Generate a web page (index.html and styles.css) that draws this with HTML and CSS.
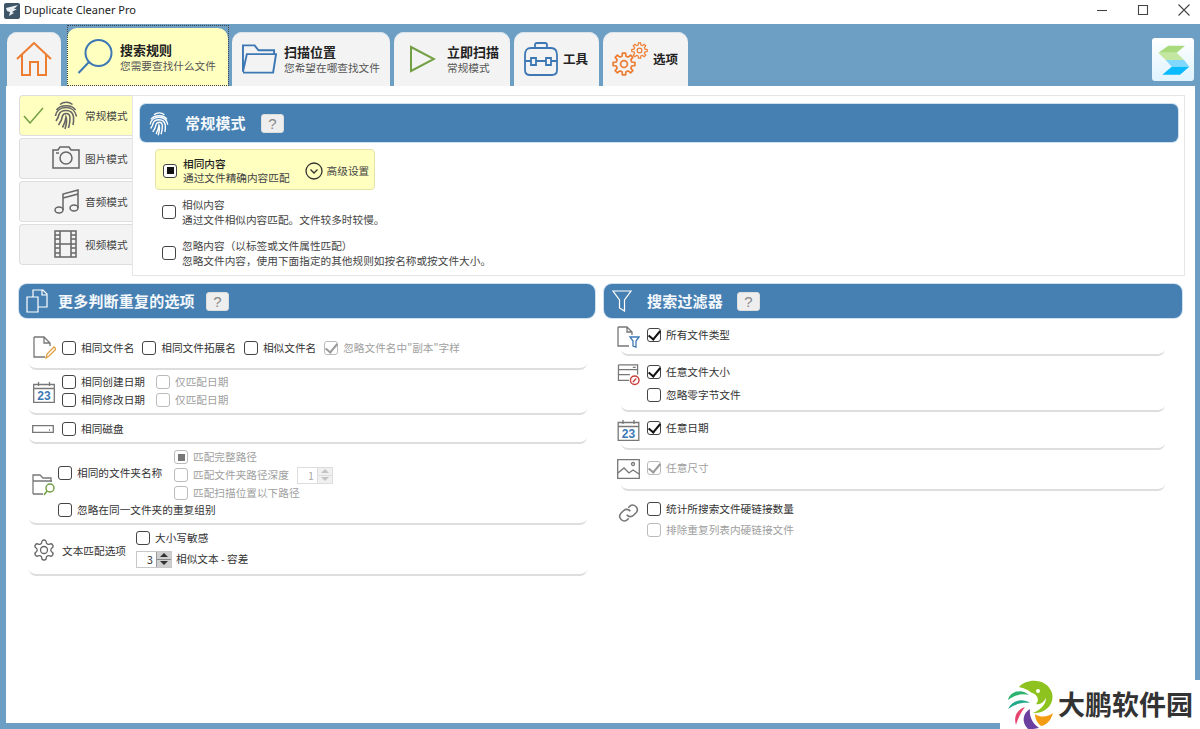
FILE: index.html
```html
<!DOCTYPE html>
<html lang="zh-CN">
<head>
  <meta charset="UTF-8">
  <title>Duplicate Cleaner Pro</title>
  <link rel="stylesheet" href="styles.css">
</head>
<body>
  <svg class="defs" width="0" height="0">
    <symbol id="gear8" viewBox="-12 -12 24 24">
      <path d="M-1.94-7.76L-1.53-10.89 1.53-10.89 1.94-7.76 4.12-6.86 6.62-8.79 8.79-6.62 6.86-4.12 7.76-1.94 10.89-1.53 10.89 1.53 7.76 1.94 6.86 4.12 8.79 6.62 6.62 8.79 4.12 6.86 1.94 7.76 1.53 10.89-1.53 10.89-1.94 7.76-4.12 6.86-6.62 8.79-8.79 6.62-6.86 4.12-7.76 1.94-10.89 1.53-10.89-1.53-7.76-1.94-6.86-4.12-8.79-6.62-6.62-8.79-4.12-6.86Z"/>
      <circle r="3.4"/>
    </symbol>
    <symbol id="fingerprint" viewBox="0 0 24 30">
      <path d="M6 4.5C9.5 1.5 15 1.5 18.500 4.500"/>
      <path d="M2.500 10C6 4.500 18 4 21.500 10"/>
      <path d="M1.500 16C2.500 9.500 8 7.500 12 7.500 17 7.500 21.500 10.500 22.500 16.500"/>
      <path d="M2 21C3.500 19 4.500 17 5 14.500 6 11.500 9 10.500 12 10.500 16 10.500 19 13 19.500 17 19.800 20 19.500 23 19 25"/>
      <path d="M4.500 25C7 22 8 19 8.500 16 9 14.500 10.500 13.500 12 13.500 14.500 13.500 16 15.500 16 18 16 21.500 15.500 25 14.500 28"/>
      <path d="M8.500 27.500C10.500 24 11.500 20.500 12 17 13 19.500 12.500 24.500 11 29"/>
    </symbol>
  </svg>

  <header class="titlebar">
    <svg class="app-icon" viewBox="0 0 16 16">
      <rect width="16" height="16" rx="2" fill="#3d5566"/>
      <path d="M2 5L14 2 10 6 13 6 8 9 10 10 5 13 6 9 3 8Z" fill="#e8eef2"/>
    </svg>
    <span class="app-title">Duplicate Cleaner Pro</span>
    <div class="win-controls">
      <svg class="win-btn" viewBox="0 0 14 14"><path d="M2 7.500H12"/></svg>
      <svg class="win-btn" viewBox="0 0 14 14"><path d="M2.500 2.500H11.500V11.500H2.500Z"/></svg>
      <svg class="win-btn" viewBox="0 0 14 14"><path d="M1.500 1.500L12.500 12.500M12.500 1.500L1.500 12.500"/></svg>
    </div>
  </header>

  <nav class="tabs">
    <div class="tab tab-home">
      <svg class="tab-icon home-icon" viewBox="0 0 36 34"><path d="M1 17L18 1 35 17M6 13V33H14V20H22V33H30V13"/></svg>
    </div>
    <div class="tab tab-active tab-search">
      <svg class="tab-icon search-icon" viewBox="0 0 36 36"><circle cx="21.500" cy="14" r="13"/><path d="M12 23L1.500 34"/></svg>
      <div class="tab-text"><strong>搜索规则</strong><span>您需要查找什么文件</span></div>
    </div>
    <div class="tab tab-location">
      <svg class="tab-icon folder-icon" viewBox="0 0 36 32"><path d="M1 29V2H13L17 7H33V11M1 30H32L35 11H5L1 29"/></svg>
      <div class="tab-text"><strong>扫描位置</strong><span>您希望在哪查找文件</span></div>
    </div>
    <div class="tab tab-scan">
      <svg class="tab-icon play-icon" viewBox="0 0 27 28"><path d="M2 2L25 14 2 26Z"/></svg>
      <div class="tab-text"><strong>立即扫描</strong><span>常规模式</span></div>
    </div>
    <div class="tab tab-tools">
      <svg class="tab-icon tools-icon" viewBox="0 0 36 34"><path d="M2 13Q2 6 8 6H28Q34 6 34 13V28Q34 33 29 33H7Q2 33 2 28ZM12 6V3Q12 1 14 1H22Q24 1 24 3V6M2 19H8M13 19H23M28 19H34M8 16H13V23H8ZM23 16H28V23H23Z"/></svg>
      <strong class="tab-label">工具</strong>
    </div>
    <div class="tab tab-options">
      <svg class="tab-icon gears-icon" viewBox="0 0 36 36">
        <use href="#gear8" x="0" y="11" width="24" height="24"/>
        <use href="#gear8" x="19" y="1" width="17" height="17"/>
      </svg>
      <strong class="tab-label">选项</strong>
    </div>
    <div class="brand-tile">
      <svg viewBox="0 0 42 43">
        <path d="M16.300 7.700H33L24.700 14.700H6.300Z" fill="#a9da7c"/>
        <path d="M6.300 14.700H24.700L32 22H13.700Z" fill="#c3e6a0"/>
        <path d="M13.700 22H32L37.300 28.700H19.700Z" fill="#80d8ff"/>
        <path d="M19.700 28.700H37.300L28 36.700H10.300Z" fill="#0abaff"/>
      </svg>
    </div>
  </nav>

  <main class="content">
    <section class="top-area">
      <div class="mode-list">
        <div class="mode mode-active">
          <svg class="mode-check" viewBox="0 0 21 17"><path d="M1 9L7 16 20 1"/></svg>
          <svg class="mode-icon print-icon"><use href="#fingerprint"/></svg>
          <span>常规模式</span>
        </div>
        <div class="mode">
          <svg class="mode-icon camera-icon" viewBox="0 0 28 23"><path d="M1 4H6L8 1H17L19 4H27V22H1Z"/><circle cx="14" cy="12" r="6"/><path d="M4 7H7"/></svg>
          <span>图片模式</span>
        </div>
        <div class="mode">
          <svg class="mode-icon music-icon" viewBox="0 0 25 25"><ellipse cx="5" cy="21" rx="4" ry="3"/><ellipse cx="20" cy="19" rx="4" ry="3"/><path d="M9 21V5L24 1V19M9 9L24 5"/></svg>
          <span>音频模式</span>
        </div>
        <div class="mode">
          <svg class="mode-icon film-icon" viewBox="0 0 23 28"><path d="M1 1H22V27H1ZM6 1V27M17 1V27M6 14H17M1 5H6M1 9H6M1 14H6M1 18H6M1 23H6M17 5H22M17 9H22M17 14H22M17 18H22M17 23H22"/></svg>
          <span>视频模式</span>
        </div>
      </div>

      <div class="mode-panel">
        <div class="bar bar-top">
          <svg class="bar-icon print-white"><use href="#fingerprint"/></svg>
          <h2>常规模式</h2>
          <span class="help">?</span>
        </div>
        <div class="choice choice-on">
          <i class="box box-square"></i>
          <div class="choice-text"><strong>相同内容</strong><span>通过文件精确内容匹配</span></div>
          <svg class="adv-icon" viewBox="0 0 18 18"><circle cx="9" cy="9" r="8"/><path d="M5.500 7.500L9 11 12.500 7.500"/></svg>
          <span class="adv-label">高级设置</span>
        </div>
        <div class="choice choice-second">
          <i class="box"></i>
          <div class="choice-text"><span>相似内容</span><span>通过文件相似内容匹配。文件较多时较慢。</span></div>
        </div>
        <div class="choice choice-third">
          <i class="box"></i>
          <div class="choice-text"><span>忽略内容（以标签或文件属性匹配）</span><span>忽略文件内容，使用下面指定的其他规则如按名称或按文件大小。</span></div>
        </div>
      </div>
    </section>

    <section class="lower-area">
      <div class="column">
        <div class="bar bar-left">
          <svg class="bar-icon copy-icon" viewBox="0 0 22 24"><path d="M1 8H12V23H1ZM7 8V1H17L21 5V18H12M16 1V6H21"/></svg>
          <h2>更多判断重复的选项</h2>
          <span class="help">?</span>
        </div>

        <div class="row row-name">
          <svg class="row-icon note-icon" viewBox="0 0 23 23"><path class="stroke-gray" d="M1 1H11L17 7V10M11 1V7H17M1 1V21H12"/><path class="stroke-amber" d="M13 22L14 18 21 11 23 13 16 20Z"/></svg>
          <label class="opt"><i class="box"></i>相同文件名</label>
          <label class="opt"><i class="box"></i>相同文件拓展名</label>
          <label class="opt"><i class="box"></i>相似文件名</label>
          <label class="opt opt-off"><i class="box box-tick"></i>忽略文件名中"副本"字样</label>
        </div>

        <div class="row row-date">
          <svg class="row-icon cal-icon" viewBox="0 0 22 22">
            <path class="stroke-gray" d="M.7 3.500H21.300V21.300H.7ZM.7 7.500H21.300M5.500 1V5M16.500 1V5"/>
            <text class="cal-num" x="11" y="18.500" text-anchor="middle">23</text>
          </svg>
          <div class="date-grid">
            <label class="opt"><i class="box"></i>相同创建日期</label>
            <label class="opt opt-off"><i class="box"></i>仅匹配日期</label>
            <label class="opt"><i class="box"></i>相同修改日期</label>
            <label class="opt opt-off"><i class="box"></i>仅匹配日期</label>
          </div>
        </div>

        <div class="row row-disk">
          <svg class="row-icon disk-icon" viewBox="0 0 22 8"><path class="stroke-gray" d="M.7.7H21.300V7.300H.7Z"/><path class="stroke-gray" d="M17 5H18"/></svg>
          <label class="opt"><i class="box"></i>相同磁盘</label>
        </div>

        <div class="row row-folder">
          <svg class="row-icon folder-find" viewBox="0 0 24 22"><path class="stroke-gray" d="M1 20V1H8L11 4H19V8M1 7H20M1 20H11"/><circle class="stroke-green" cx="18" cy="14" r="4"/><path class="stroke-green" d="M15 17L12 21"/></svg>
          <div class="folder-main">
            <label class="opt"><i class="box"></i>相同的文件夹名称</label>
          </div>
          <div class="folder-sub">
            <label class="opt opt-off"><i class="box box-square"></i>匹配完整路径</label>
            <div class="opt-line">
              <label class="opt opt-off"><i class="box"></i>匹配文件夹路径深度</label>
              <div class="spin spin-off">
                <span class="spin-val">1</span>
                <span class="spin-btns"><b class="up"></b><b class="down"></b></span>
              </div>
            </div>
            <label class="opt opt-off"><i class="box"></i>匹配扫描位置以下路径</label>
          </div>
          <label class="opt folder-group"><i class="box"></i>忽略在同一文件夹的重复组别</label>
        </div>

        <div class="row row-text">
          <svg class="row-icon cog-icon" viewBox="0 0 24 24"><path d="M12.220 2h-.44a2 2 0 0 0-2 2v.18a2 2 0 0 1-1 1.730l-.43.25a2 2 0 0 1-2 0l-.15-.08a2 2 0 0 0-2.730.73l-.22.38a2 2 0 0 0 .73 2.730l.15.1a2 2 0 0 1 1 1.720v.51a2 2 0 0 1-1 1.740l-.15.09a2 2 0 0 0-.73 2.730l.22.38a2 2 0 0 0 2.730.73l.15-.08a2 2 0 0 1 2 0l.43.25a2 2 0 0 1 1 1.730V20a2 2 0 0 0 2 2h.44a2 2 0 0 0 2-2v-.18a2 2 0 0 1 1-1.730l.43-.25a2 2 0 0 1 2 0l.15.08a2 2 0 0 0 2.730-.73l.22-.39a2 2 0 0 0-.73-2.730l-.15-.08a2 2 0 0 1-1-1.740v-.5a2 2 0 0 1 1-1.740l.15-.09a2 2 0 0 0 .73-2.730l-.22-.38a2 2 0 0 0-2.730-.73l-.15.08a2 2 0 0 1-2 0l-.43-.25a2 2 0 0 1-1-1.730V4a2 2 0 0 0-2-2z"/><circle cx="12" cy="12" r="3.500"/></svg>
          <span class="text-label">文本匹配选项</span>
          <div class="text-opts">
            <label class="opt"><i class="box"></i>大小写敏感</label>
            <div class="opt-line">
              <div class="spin">
                <span class="spin-val">3</span>
                <span class="spin-btns"><b class="up"></b><b class="down"></b></span>
              </div>
              <span class="spin-label">相似文本 - 容差</span>
            </div>
          </div>
        </div>
      </div>

      <div class="column">
        <div class="bar bar-right">
          <svg class="bar-icon funnel-icon" viewBox="0 0 20 22"><path d="M1 1H19L12.500 10V21L7.500 18V10Z"/></svg>
          <h2>搜索过滤器</h2>
          <span class="help">?</span>
        </div>

        <div class="row f-row f-type">
          <svg class="row-icon f-icon" viewBox="0 0 23 22"><path class="stroke-gray" d="M1 1H10L15 6V9M10 1V6H15M1 1V20H12"/><path class="stroke-blue" d="M13 11H22L19 15V21L16 20V15Z"/></svg>
          <label class="opt"><i class="box box-check"></i>所有文件类型</label>
        </div>

        <div class="row f-row f-size">
          <svg class="row-icon f-icon" viewBox="0 0 23 23"><path class="stroke-gray" d="M1 1H21V11M1 1V17H12M1 6H21M1 11H13M16 3.500H19"/><circle class="stroke-red" cx="18" cy="17" r="4.500"/><path class="stroke-red" d="M16 19L19.500 15"/></svg>
          <div class="f-stack">
            <label class="opt"><i class="box box-check"></i>任意文件大小</label>
            <label class="opt"><i class="box"></i>忽略零字节文件</label>
          </div>
        </div>

        <div class="row f-row f-date">
          <svg class="row-icon f-icon" viewBox="0 0 22 22">
            <path class="stroke-gray" d="M.7 3.500H21.300V21.300H.7ZM.7 7.500H21.300M5.500 1V5M16.500 1V5"/>
            <text class="cal-num" x="11" y="18.500" text-anchor="middle">23</text>
          </svg>
          <label class="opt"><i class="box box-check"></i>任意日期</label>
        </div>

        <div class="row f-row f-dim">
          <svg class="row-icon f-icon" viewBox="0 0 23 20"><path class="stroke-gray" d="M.7.7H22.300V19.300H.7ZM1 14L7 9 12 14 16 11 22 15"/><circle class="stroke-gray" cx="16" cy="5" r="1.500"/></svg>
          <label class="opt opt-off"><i class="box box-tick"></i>任意尺寸</label>
        </div>

        <div class="f-row f-link">
          <svg class="row-icon f-icon link-icon" viewBox="0 0 24 24"><path d="M10 14a5 5 0 0 0 7.500.5l3-3a5 5 0 0 0-7-7l-1.700 1.700"/><path d="M14 10a5 5 0 0 0-7.500-.5l-3 3a5 5 0 0 0 7 7l1.700-1.700"/></svg>
          <div class="f-stack">
            <label class="opt"><i class="box"></i>统计所搜索文件硬链接数量</label>
            <label class="opt opt-off"><i class="box"></i>排除重复列表内硬链接文件</label>
          </div>
        </div>
      </div>
    </section>
  </main>

  <div class="watermark">
    <svg class="wm-logo" viewBox="0 0 46 49">
      <path d="M12 7C20-2 40-2 45 13 48 25 37 34 26 33 33 30 39 25 39 18 36 23 33 25 29 24 33 20 30 14 25 13 20 9 16 8 12 7Z" fill="#8dc21f"/>
      <circle cx="31" cy="11" r="2" fill="#fff"/>
      <path d="M1 20C3 11 15 8 22 15 15 13 8 15 1 20Z" fill="#2db36e"/>
      <path d="M1 29C5 20 16 18 23 23 15 22 8 24 1 29Z" fill="#22a98a"/>
      <path d="M9 45C6 36 11 29 18 27 14 32 11 38 9 45Z" fill="#e5446d"/>
      <path d="M21 49C14 42 16 33 23 29 22 36 25 43 32 48 28 49 24 49 21 49Z" fill="#6b3fa0"/>
      <path d="M28 34C34 38 41 37 46 33 44 41 38 46 34 46 30 43 28 39 28 34Z" fill="#f39c12"/>
    </svg>
    <span class="wm-text">大鹏软件园</span>
  </div>
</body>
</html>
```

FILE: styles.css
```css
:root {
  --frame: #6c9fc3;
  --bar: #4680b3;
  --yellow: #ffffc0;
  --text: #333;
  --muted: #a0a0a0;
  --line: #dedede;
  --cjk: "Noto Sans CJK SC", "Noto Sans", sans-serif;
}

* {
  box-sizing: border-box;
  margin: 0;
  padding: 0;
}

body {
  width: 1200px;
  height: 729px;
  background: var(--frame);
  font-family: var(--cjk);
  font-size: 10.67px;
  line-height: 14px;
  color: var(--text);
  display: flex;
  flex-direction: column;
  position: relative;
  overflow: hidden;
}

svg {
  display: block;
  flex: none;
  fill: none;
}

.defs {
  position: absolute;
}

.stroke-gray { stroke: #777; stroke-width: 1.3; }
.stroke-amber { stroke: #e0a040; stroke-width: 1.3; }
.stroke-green { stroke: #6f9c3f; stroke-width: 1.4; }
.stroke-blue { stroke: #3d78b5; stroke-width: 1.3; }
.stroke-red { stroke: #c9413a; stroke-width: 1.5; }

.cal-num {
  font-family: "Liberation Sans", sans-serif;
  font-size: 12px;
  font-weight: 700;
  fill: #3d78b5;
}

/* title bar */
.titlebar {
  height: 24px;
  background: #fff;
  display: flex;
  align-items: center;
  flex: none;
}

.app-icon {
  width: 16px;
  height: 16px;
  margin-left: 4px;
  margin-top: -2px;
}

.app-title {
  font-family: "Noto Sans", sans-serif;
  font-size: 11px;
  margin-left: 4px;
  margin-top: -4px;
  color: #222;
}

.win-controls {
  margin-left: auto;
  margin-right: 9px;
  margin-top: -4px;
  display: flex;
  gap: 27px;
}

.win-btn {
  width: 14px;
  height: 14px;
  stroke: #444;
  stroke-width: 1.1;
}

/* tabs */
.tabs {
  height: 62px;
  flex: none;
  display: flex;
  align-items: flex-end;
  padding-left: 7px;
  gap: 4px;
}

.tab {
  height: 54px;
  background: #f3f3f3;
  border-radius: 10px 10px 0 0;
  display: flex;
  align-items: center;
  box-shadow: inset 0 1px 0 #d8e3ec;
}

.tab-text {
  display: flex;
  flex-direction: column;
  color: #555;
}

.tab-text strong {
  font-size: 13px;
  line-height: 17px;
  color: #222;
}

.tab-text span {
  line-height: 16px;
}

.tab-label {
  font-size: 12.500px;
  color: #222;
}

.tab-home {
  width: 54px;
  margin-right: 2px;
  justify-content: center;
}

.home-icon {
  width: 36px;
  height: 34px;
  stroke: #ed7d31;
  stroke-width: 2;
}

.tab-active {
  height: 58px;
  background: var(--yellow);
  box-shadow: none;
  position: relative;
}

/* focus rectangle sits a little above the tab */
.tab-active::after {
  content: "";
  position: absolute;
  left: 0;
  right: -1px;
  top: -3px;
  bottom: 0;
  border: 1px dotted #444;
}

.tab-search {
  width: 161px;
  padding-left: 10px;
  gap: 7px;
}

.search-icon {
  width: 36px;
  height: 36px;
  stroke: #3d78b5;
  stroke-width: 2;
}

.tab-location {
  width: 158px;
  padding-left: 10px;
  gap: 7px;
}

.folder-icon {
  width: 35px;
  height: 32px;
  stroke: #3d78b5;
  stroke-width: 2;
}

.tab-scan {
  width: 116px;
  padding-left: 15px;
  gap: 11px;
}

.play-icon {
  width: 27px;
  height: 28px;
  stroke: #74a045;
  stroke-width: 2;
}

.tab-tools {
  width: 85px;
  padding-left: 9px;
  gap: 4px;
}

.tools-icon {
  width: 36px;
  height: 34px;
  stroke: #3d78b5;
  stroke-width: 1.8;
}

.tab-options {
  width: 85px;
  padding-left: 9px;
  gap: 5px;
}

.gears-icon {
  width: 36px;
  height: 36px;
  stroke: #ed7d31;
  stroke-width: 1.700;
}

.brand-tile {
  width: 42px;
  height: 43px;
  margin-left: auto;
  margin-right: 6px;
  margin-bottom: 5px;
  border-radius: 3px;
  background: linear-gradient(#fff, #dff3ff);
}

/* main area */
.content {
  flex: 1;
  margin: 0 5px 6px 6px;
  background: #fff;
  padding: 9px 10px 0 13px;
}

.top-area {
  display: flex;
  height: 181px;
}

.mode-list {
  width: 113px;
  display: flex;
  flex-direction: column;
  gap: 2px;
}

.mode {
  height: 41px;
  background: #f3f3f3;
  border: 1px solid var(--line);
  border-right: 0;
  border-radius: 4px 0 0 4px;
  display: flex;
  align-items: center;
  position: relative;
  padding-left: 65px;
  color: #444;
}

.mode-active {
  background: var(--yellow);
}

.mode-check {
  position: absolute;
  left: 3px;
  top: 11px;
  width: 21px;
  height: 17px;
  stroke: #74a045;
  stroke-width: 1.500;
}

.mode-icon {
  position: absolute;
  stroke: #666;
  stroke-width: 1.500;
}

.print-icon {
  left: 34px;
  top: 4px;
  width: 24px;
  height: 30px;
  stroke: #666;
  stroke-width: 1.600;
}

.camera-icon {
  left: 32px;
  top: 7px;
  width: 28px;
  height: 23px;
}

.music-icon {
  left: 34px;
  top: 7px;
  width: 25px;
  height: 25px;
}

.film-icon {
  left: 34px;
  top: 5px;
  width: 23px;
  height: 28px;
}

.mode-panel {
  flex: 1;
  border: 1px solid #e6e6e6;
  padding: 8px 6px 0 7px;
}

.bar {
  height: 38px;
  background: var(--bar);
  border-radius: 6px;
  display: flex;
  align-items: center;
  color: #fff;
  box-shadow: 0 0 0 1px #cfe0ee;
}

.bar h2 {
  font-size: 15px;
  letter-spacing: .2px;
  font-weight: 700;
  color: #f4f8fb;
}

.help {
  width: 23px;
  height: 19px;
  background: #eee;
  border: 1px solid #ddd;
  border-radius: 3px;
  color: #888;
  font-family: "Liberation Sans", sans-serif;
  font-size: 15px;
  line-height: 17px;
  text-align: center;
}

.bar-top {
  padding-left: 9px;
}

.bar-top .bar-icon {
  width: 20px;
  height: 25px;
  margin-right: 16px;
}

.print-white {
  stroke: #fff;
  stroke-width: 1.700;
}

.bar-top .help {
  margin-left: 15px;
}

.choice {
  display: flex;
  align-items: center;
  padding-left: 22px;
}

.choice-text {
  display: flex;
  flex-direction: column;
  margin-left: 6px;
  margin-top: 1px;
  color: #444;
  line-height: 15px;
}

.choice-text strong {
  font-weight: 500;
  color: #222;
}

.choice-on {
  width: 220px;
  height: 41px;
  margin: 7px 0 0 15px;
  padding-left: 7px;
  background: var(--yellow);
  border: 1px solid #e6e2a8;
  border-radius: 4px;
}

.choice-on .choice-text {
  margin-top: 3px;
  line-height: 14px;
}

.choice-on .box {
  margin-top: 2px;
}

.adv-icon {
  width: 18px;
  height: 18px;
  margin-left: 15px;
  margin-top: 2px;
  stroke: #333;
  stroke-width: 1.300;
}

.adv-label {
  margin-left: 4px;
  margin-top: 2px;
  color: #444;
}

.choice-second {
  margin-top: 6px;
}

.choice-third {
  margin-top: 10px;
}

/* checkboxes */
.box {
  width: 14px;
  height: 14px;
  flex: none;
  background: #fff;
  border: 1.300px solid #444;
  border-radius: 3px;
  display: inline-flex;
  align-items: center;
  justify-content: center;
}

.box-square::after {
  content: "";
  width: 7px;
  height: 7px;
  background: #111;
}

.box-check::after,
.box-tick::after {
  content: "";
  width: 5px;
  height: 10px;
  margin-top: -3px;
  border-right: 2.500px solid #111;
  border-bottom: 2.500px solid #111;
  transform: rotate(40deg);
}

.opt {
  display: inline-flex;
  align-items: center;
  gap: 5px;
  height: 14px;
  white-space: nowrap;
}

.opt-off {
  color: var(--muted);
}

.opt-off .box {
  border-color: #bbb;
}

.opt-off .box-square::after {
  background: #777;
}

.opt-off .box-tick::after {
  border-color: #999;
}

.opt-line {
  display: flex;
  align-items: center;
  height: 14px;
}

/* lower columns */
.lower-area {
  display: grid;
  grid-template-columns: 576px 578px;
  gap: 9px;
  margin-top: 8px;
}

.bar-left,
.bar-right {
  height: 34px;
  border-radius: 8px;
}

.bar-left {
  padding-left: 7px;
}

.copy-icon {
  width: 22px;
  height: 24px;
  margin-right: 10px;
  stroke: #fff;
  stroke-width: 1.200;
}

.bar-left .help {
  margin-left: 11px;
}

.bar-right {
  padding-left: 8px;
}

.funnel-icon {
  width: 20px;
  height: 22px;
  margin-right: 15px;
  stroke: #fff;
  stroke-width: 1.200;
}

.bar-right .help {
  margin-left: 14px;
}

.row {
  margin: 0 8px 0 10px;
  border-bottom: 2px solid var(--line);
  border-radius: 0 0 7px 7px;
}

.row-icon {
  flex: none;
}

.row-name {
  height: 52px;
  padding: 23px 0 0 4px;
  display: flex;
  gap: 8px;
}

.note-icon {
  width: 23px;
  height: 23px;
  margin-top: -5px;
  margin-right: -2px;
}

.row-date {
  height: 45px;
  padding: 5px 0 0 4px;
  display: flex;
}

.cal-icon {
  width: 22px;
  height: 22px;
  margin: 6px 7px 0 0;
}

.date-grid {
  display: grid;
  grid-template-columns: 94px auto;
  row-gap: 4px;
  justify-content: start;
  align-self: flex-start;
}

.row-disk {
  height: 29px;
  padding: 7px 0 0 3px;
  display: flex;
  align-items: flex-start;
}

.disk-icon {
  width: 22px;
  height: 8px;
  margin: 3px 8px 0 0;
}

.row-folder {
  height: 81px;
  padding-top: 6px;
  display: grid;
  grid-template-columns: 29px 116px 1fr;
  grid-template-rows: 50px 14px;
  row-gap: 3px;
}

.folder-find {
  width: 24px;
  height: 22px;
  margin: 24px 0 0 3px;
}

.folder-main {
  display: flex;
  align-items: center;
  padding-bottom: 4px;
}

.folder-sub {
  display: flex;
  flex-direction: column;
  gap: 4px;
}

.folder-group {
  grid-column: 2 / 4;
}

.spin {
  width: 36px;
  height: 17px;
  background: #fff;
  border: 1px solid #c8c8c8;
  display: flex;
}

.spin-off {
  margin-left: 8px;
  border-color: #ddd;
  color: #aaa;
}

.spin-val {
  flex: 1;
  text-align: right;
  padding-right: 3px;
  line-height: 15px;
}

.spin-btns {
  width: 15px;
  display: flex;
  flex-direction: column;
  background: #cfcfcf;
  border-left: 1px solid #999;
}

.spin-off .spin-btns {
  background: #f0f0f0;
  border-color: #ddd;
}

.spin-btns b {
  flex: 1;
  display: flex;
  align-items: center;
  justify-content: center;
}

.spin-btns b::after {
  content: "";
  border-left: 4px solid transparent;
  border-right: 4px solid transparent;
}

.spin-btns .up {
  border-bottom: 1px solid #888;
}

.spin-off .spin-btns .up {
  border-color: #ddd;
}

.spin-btns .up::after {
  border-bottom: 4px solid #333;
}

.spin-btns .down::after {
  border-top: 4px solid #333;
}

.spin-off .spin-btns .up::after {
  border-bottom-color: #c4c4c4;
}

.spin-off .spin-btns .down::after {
  border-top-color: #c4c4c4;
}

.row-text {
  height: 51px;
  padding: 6px 0 0 3px;
  display: flex;
  align-items: flex-start;
}

.cog-icon {
  width: 24px;
  height: 24px;
  margin-top: 7px;
  stroke: #666;
  stroke-width: 1.300;
}

.text-label {
  margin: 13px 0 0 6px;
  width: 74px;
  white-space: nowrap;
}

.text-opts {
  display: flex;
  flex-direction: column;
  gap: 7px;
}

.spin-label {
  margin-left: 4px;
}

/* filter column */
.f-row {
  margin: 0 17px;
  display: flex;
}

.f-row .f-icon {
  width: 23px;
  height: 22px;
  margin-left: -4px;
  margin-right: 7px;
}

.f-type {
  height: 38px;
  padding-top: 10px;
}

.f-type .f-icon {
  margin-top: -2px;
}

.f-size {
  height: 56px;
  padding-top: 9px;
}

.f-stack {
  display: flex;
  flex-direction: column;
  gap: 9px;
}

.f-size .f-icon {
  margin-top: -1px;
}

.f-date {
  height: 38px;
  padding-top: 9px;
}

.f-date .f-icon {
  margin-top: -2px;
}

.f-dim {
  height: 41px;
  padding-top: 11px;
}

.f-dim .f-icon {
  height: 20px;
  margin-top: -2px;
}

.f-link {
  padding-top: 11px;
}

.f-link .link-icon {
  stroke: #777;
  stroke-width: 1.700;
}

.f-link .f-stack {
  gap: 7px;
}

/* bottom corner stamp */
.watermark {
  position: absolute;
  left: 1000px;
  top: 680px;
  width: 200px;
  height: 49px;
  background: #fff;
  display: flex;
  align-items: center;
  padding-left: 7px;
  gap: 5px;
}

.wm-logo {
  width: 46px;
  height: 49px;
}

.wm-text {
  font-size: 27px;
  font-weight: 700;
  line-height: 30px;
  margin-top: -2px;
  color: #333;
}
```
